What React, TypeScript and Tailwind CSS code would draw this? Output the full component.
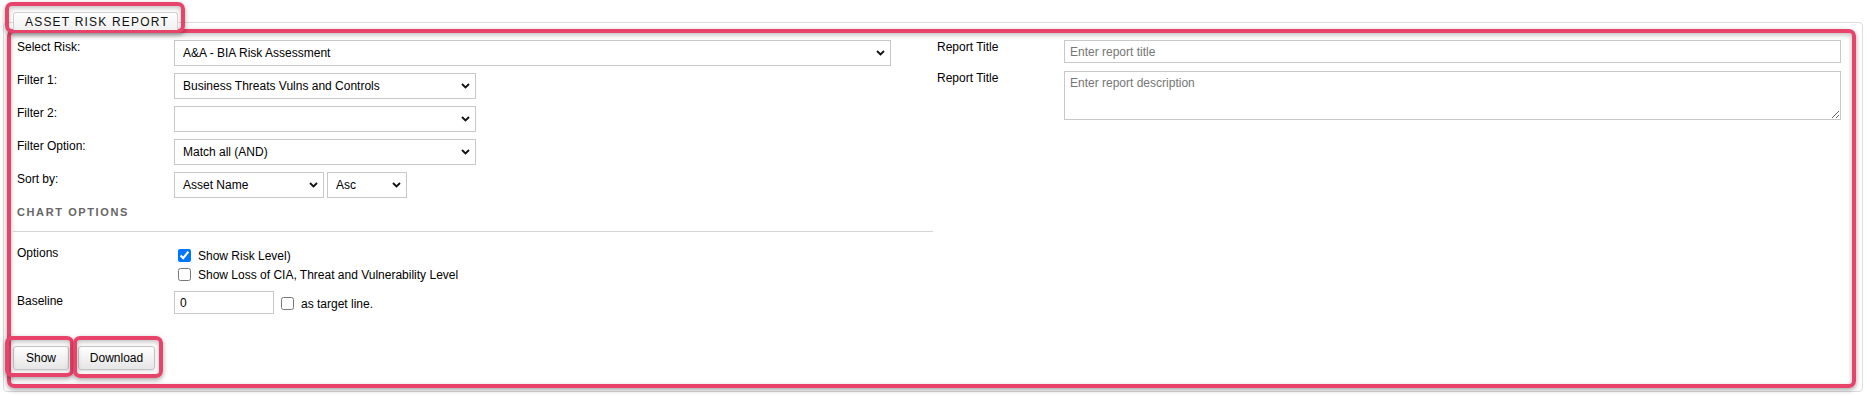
import { ChangeEvent, useState } from "react";

function Chevron() {
  return (
    <svg width="9" height="6" viewBox="0 0 9 6" className="pointer-events-none absolute right-[6px] top-1/2 -translate-y-1/2">
      <path d="M1 1l3.5 3.5L8 1" fill="none" stroke="#111" strokeWidth="1.8" />
    </svg>
  );
}

function Select({ width, options }: { width: string; options: string[] }) {
  return (
    <div className={`relative h-[26px] ${width}`}>
      <select className="h-full w-full appearance-none border border-[#c8c8c8] bg-white pl-[8px] pr-[20px] text-[12px] text-black outline-none">
        {options.map(o => (
          <option key={o}>{o}</option>
        ))}
      </select>
      <Chevron />
    </div>
  );
}

function Row({ label, children }: { label: string; children: React.ReactNode }) {
  return (
    <div className="mb-[7px] flex items-start pl-[4px]">
      <div className="w-[157px] leading-[14px]">{label}</div>
      {children}
    </div>
  );
}

const ringBox =
  "pointer-events-none absolute rounded-[7px] border-[4px] border-[#e8436a] shadow-[0_2px_5px_rgba(0,0,0,0.35),inset_0_2px_5px_rgba(0,0,0,0.25)]";

export default function App() {
  const [riskLevel, setRiskLevel] = useState(true);
  const [loss, setLoss] = useState(false);
  const [target, setTarget] = useState(false);
  const [baseline, setBaseline] = useState("0");

  const btn =
    "h-[24px] rounded-[3px] border border-[#c5c5c5] bg-gradient-to-b from-white to-[#e6e6e6] text-[12px] text-black shadow-[0_1px_2px_rgba(0,0,0,0.15)]";

  return (
    <div className="relative h-[396px] w-[1867px] bg-white font-['Liberation_Sans',Arial,sans-serif] text-[12px] text-black">
      <div className="pt-[12px]">
        {/* Tab */}
        <div className="relative z-10 ml-[13px] flex h-[18px] w-[165px] items-center rounded-t-[3px] border border-b-0 border-[#cfcfcf] bg-gradient-to-b from-white to-[#f0f0f0] pl-[11px] text-[12px] tracking-[1.2px] text-[#111]">
          ASSET RISK REPORT
        </div>

        {/* Panel */}
        <div className="-mt-[8px] ml-[3px] flex h-[370px] w-[1860px] rounded-[4px] border border-[#dcdcdc] pl-[9px] pr-[21px] pt-[17px]">
          {/* Left column */}
          <div className="flex w-[920px] flex-col">
            <Row label="Select Risk:">
              <Select width="w-[717px]" options={["A&A - BIA Risk Assessment"]} />
            </Row>
            <Row label="Filter 1:">
              <Select width="w-[302px]" options={["Business Threats Vulns and Controls"]} />
            </Row>
            <Row label="Filter 2:">
              <Select width="w-[302px]" options={[""]} />
            </Row>
            <Row label="Filter Option:">
              <Select width="w-[302px]" options={["Match all (AND)", "Match any (OR)"]} />
            </Row>
            <div className="flex items-start pl-[4px]">
              <div className="w-[157px] leading-[14px]">Sort by:</div>
              <div className="flex gap-[3px]">
                <Select width="w-[150px]" options={["Asset Name"]} />
                <Select width="w-[80px]" options={["Asc", "Desc"]} />
              </div>
            </div>

            <div className="mt-[8px] pl-[4px] text-[11px] font-bold leading-[13px] tracking-[1.6px] text-[#666]">
              CHART OPTIONS
            </div>
            <div className="mt-[12px] border-t border-[#d6d6d6]" />

            <div className="mt-[14px] flex items-start pl-[4px]">
              <div className="w-[157px] leading-[14px]">Options</div>
              <div className="ml-[4px] flex flex-col">
                <label className="flex h-[19px] items-center gap-[7px]">
                  <input
                    type="checkbox"
                    className="m-0 h-[13px] w-[13px] accent-[#0075ff]"
                    checked={riskLevel}
                    onChange={() => setRiskLevel(!riskLevel)}
                  />
                  Show Risk Level)
                </label>
                <label className="flex h-[19px] items-center gap-[7px]">
                  <input
                    type="checkbox"
                    className="m-0 h-[13px] w-[13px]"
                    checked={loss}
                    onChange={() => setLoss(!loss)}
                  />
                  Show Loss of CIA, Threat and Vulnerability Level
                </label>
              </div>
            </div>

            <div className="mt-[7px] flex items-start pl-[4px]">
              <div className="w-[157px] pt-[3px] leading-[14px]">Baseline</div>
              <input
                value={baseline}
                onChange={(e: ChangeEvent<HTMLInputElement>) => setBaseline(e.target.value)}
                className="h-[23px] w-[100px] border border-[#c8c8c8] px-[5px] text-[12px] outline-none"
              />
              <label className="ml-[7px] flex h-[23px] items-center gap-[7px] pt-[2px]">
                <input
                  type="checkbox"
                  className="m-0 h-[13px] w-[13px]"
                  checked={target}
                  onChange={() => setTarget(!target)}
                />
                as target line.
              </label>
            </div>

            <div className="mt-[32px] flex gap-[9px]">
              <button className={`${btn} w-[56px]`}>Show</button>
              <button className={`${btn} w-[77px]`}>Download</button>
            </div>
          </div>

          {/* Right column */}
          <div className="ml-[4px] flex flex-1 flex-col">
            <div className="flex items-start">
              <div className="w-[127px] leading-[14px]">Report Title</div>
              <input
                placeholder="Enter report title"
                className="h-[23px] flex-1 border border-[#c8c8c8] px-[5px] text-[12px] outline-none placeholder:text-[#757575]"
              />
            </div>
            <div className="mt-[8px] flex items-start">
              <div className="w-[127px] leading-[14px]">Report Title</div>
              <textarea
                placeholder="Enter report description"
                className="h-[49px] flex-1 resize-y border border-[#c8c8c8] px-[5px] pt-[2px] text-[12px] outline-none placeholder:text-[#757575]"
              />
            </div>
          </div>
        </div>
      </div>

      {/* Highlight annotations */}
      <div className={`${ringBox} left-[7px] top-[29px] h-[359px] w-[1849px]`} />
      <div className={`${ringBox} left-[5px] top-[2px] h-[31px] w-[180px]`} />
      <div className={`${ringBox} left-[5px] top-[336px] h-[41px] w-[69px]`} />
      <div className={`${ringBox} left-[73px] top-[336px] h-[42px] w-[90px]`} />
    </div>
  );
}
